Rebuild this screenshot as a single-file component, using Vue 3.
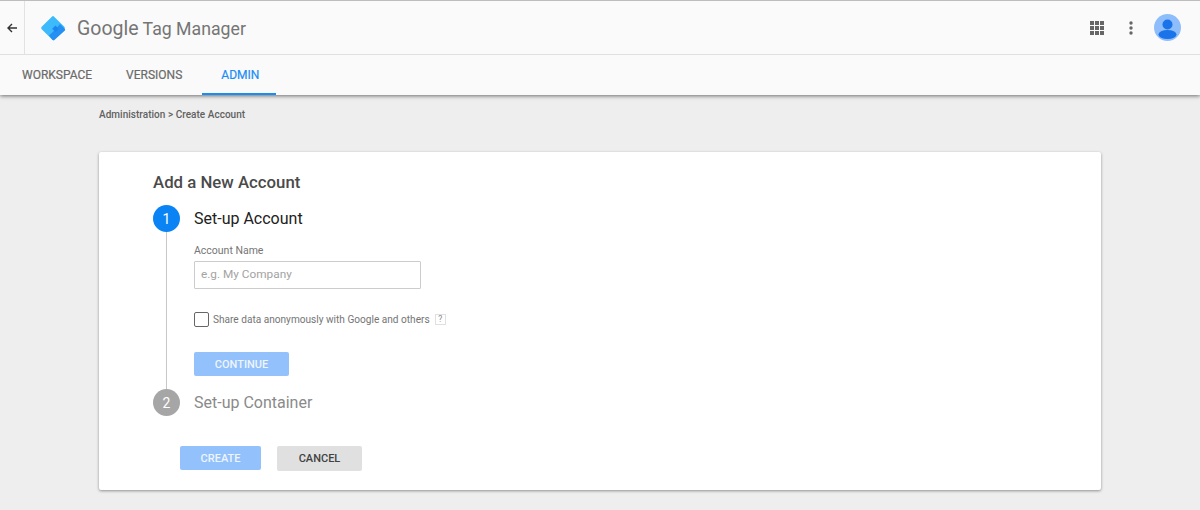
<script setup>
const tabs = [
  { label: 'WORKSPACE', active: false },
  { label: 'VERSIONS', active: false },
  { label: 'ADMIN', active: true }
]
</script>

<template>
  <div class="page">
    <header class="top">
      <div class="bar">
        <div class="back">
          <svg width="12" height="12" viewBox="0 0 12 12"><path d="M11 6H2M6 2 2 6l4 4" fill="none" stroke="#333" stroke-width="1.4"/></svg>
        </div>
        <div class="logo">
          <svg width="26" height="26" viewBox="0 0 26 26">
            <rect x="4.2" y="4.2" width="17.6" height="17.6" rx="1.6" transform="rotate(45 13 13)" fill="#3cbafb"/>
            <path d="M20 9 24.900 13.900a1.300 1.300 0 0 1 0 1.500L14.400 25a1.300 1.300 0 0 1-1.800 0L9 20.500l6-5.500z" fill="#2490f2"/>
            <path d="M15.500 10.500 18.800 13.800 15.500 17.100 12.200 13.800z" fill="#1c86ee"/>
          </svg>
          <span class="brand"><span class="g">Google</span> Tag Manager</span>
        </div>
        <div class="actions">
          <svg class="grid" width="14" height="14" viewBox="0 0 14 14" fill="#666">
            <rect x="0" y="0" width="4" height="4"/><rect x="5" y="0" width="4" height="4"/><rect x="10" y="0" width="4" height="4"/>
            <rect x="0" y="5" width="4" height="4"/><rect x="5" y="5" width="4" height="4"/><rect x="10" y="5" width="4" height="4"/>
            <rect x="0" y="10" width="4" height="4"/><rect x="5" y="10" width="4" height="4"/><rect x="10" y="10" width="4" height="4"/>
          </svg>
          <svg class="dots" width="4" height="14" viewBox="0 0 4 14" fill="#666">
            <circle cx="2" cy="2" r="1.7"/><circle cx="2" cy="7" r="1.7"/><circle cx="2" cy="12" r="1.7"/>
          </svg>
          <svg class="avatar" width="27" height="27" viewBox="0 0 27 27">
            <circle cx="13.5" cy="13.5" r="13.5" fill="#8ebdfb"/>
            <circle cx="13.5" cy="10.5" r="5" fill="#1a73e8"/>
            <ellipse cx="13.5" cy="20.500" rx="9" ry="4.500" fill="#1a73e8"/>
          </svg>
        </div>
      </div>
      <nav class="tabs">
        <a v-for="t in tabs" :key="t.label" class="tab" :class="{ active: t.active }">{{ t.label }}</a>
      </nav>
    </header>

    <main class="main">
      <div class="crumb">Administration &gt; Create Account</div>
      <section class="card">
        <h1 class="title">Add a New Account</h1>
        <div class="step">
          <div class="rail">
            <div class="num on">1</div>
            <div class="line"></div>
          </div>
          <div class="body">
            <h2 class="step-title">Set-up Account</h2>
            <label class="label">Account Name</label>
            <div class="input">e.g. My Company</div>
            <div class="share">
              <span class="check"></span>
              <span class="share-text">Share data anonymously with Google and others</span>
              <span class="help">?</span>
            </div>
            <button class="btn primary continue">CONTINUE</button>
          </div>
        </div>
        <div class="step second">
          <div class="rail"><div class="num off">2</div></div>
          <h2 class="step-title muted">Set-up Container</h2>
        </div>
        <div class="foot">
          <button class="btn primary create">CREATE</button>
          <button class="btn cancel">CANCEL</button>
        </div>
      </section>
    </main>
  </div>
</template>

<style>
html, body { margin: 0; background: #eeeeee; }
</style>

<style scoped>
.page { width: 1200px; height: 510px; overflow: hidden; background: #eee; font-family: Roboto, "Liberation Sans", sans-serif; }
.top { background: #fafafa; border-top: 1px solid #bdbdbd; box-shadow: 0 1px 4px rgba(0,0,0,.55); position: relative; }
.bar { height: 53px; display: flex; align-items: center; border-bottom: 1px solid #e0e0e0; }
.back { width: 24px; height: 53px; border-right: 1px solid #e2e2e2; display: flex; align-items: center; justify-content: center; }
.logo { display: flex; align-items: center; margin-left: 15px; gap: 11px; }
.brand { font-size: 17.700px; color: #757575; white-space: nowrap; padding-top: 2px; }
.g { font-size: 19.500px; }
.actions { margin-left: auto; display: flex; align-items: center; margin-right: 19px; }
.grid { margin-right: 25px; }
.dots { margin-right: 21px; }
.tabs { height: 40px; display: flex; }
.tab { height: 40px; box-sizing: border-box; display: flex; align-items: center; font-size: 12px; font-weight: 400; -webkit-text-stroke: .2px; color: #6a6a6a; padding: 0 17px 0 22px; }
.tab:nth-child(2) { padding: 0 20px 0 17px; }
.tab.active { color: #1a8cf5; border-bottom: 2px solid #1a8cf5; padding: 2px 17px 0 19px; }
.main { padding: 0 99px; }
.crumb { font-size: 10px; font-weight: 500; color: #616161; margin-top: 14px; height: 12px; line-height: 12px; letter-spacing: .03px; }
.card { margin-top: 31px; width: 1002px; height: 338px; box-sizing: border-box; background: #fff; border-radius: 2px; box-shadow: 0 1px 3px rgba(0,0,0,.4); padding: 20px 0 0 54px; }
.title { margin: 0; font-size: 16.800px; font-weight: 500; color: #4a4a4a; line-height: 20px; }
.step { display: flex; margin-top: 13px; gap: 14px; }
.rail { width: 27px; display: flex; flex-direction: column; align-items: center; }
.num { width: 27px; height: 27px; border-radius: 50%; color: #fff; font-size: 14px; display: flex; align-items: center; justify-content: center; flex: none; }
.num.on { background: #0a84f5; }
.num.off { background: #a6a6a6; }
.line { width: 1px; background: #c8c8c8; height: 157px; }
.step-title { margin: 0; font-size: 16px; font-weight: 400; color: #212121; line-height: 27px; }
.step-title.muted { color: #8a8a8a; }
.second { margin-top: 0; }
.label { display: block; font-size: 10.500px; color: #757575; margin-top: 12px; line-height: 13px; }
.input { margin-top: 4px; width: 227px; height: 28px; box-sizing: border-box; border: 1px solid #ccc; border-radius: 1px; font-size: 11.800px; color: #a3a3a3; padding-left: 6px; line-height: 25px; }
.share { display: flex; align-items: center; margin-top: 22px; height: 16px; }
.check { width: 15px; height: 15px; box-sizing: border-box; border: 1.500px solid #666; border-radius: 2px; margin-right: 4px; }
.share-text { font-size: 10.100px; color: #757575; }
.help { margin-left: 5px; width: 11px; height: 11px; box-sizing: border-box; border: 1px solid #e0e0e0; font-size: 8.500px; color: #888; display: flex; align-items: center; justify-content: center; }
.btn { border: 0; border-radius: 2px; font: 500 11px Roboto, "Liberation Sans", sans-serif; display: block; padding: 0; height: 24px; }
.primary { background: #93c1fb; color: #eef5fe; }
.continue { width: 95px; margin-top: 25px; }
.foot { display: flex; margin: 30px 0 0 27px; gap: 16px; }
.create { width: 81px; }
.cancel { width: 85px; height: 25px; background: #e0e0e0; color: #424242; }
</style>
